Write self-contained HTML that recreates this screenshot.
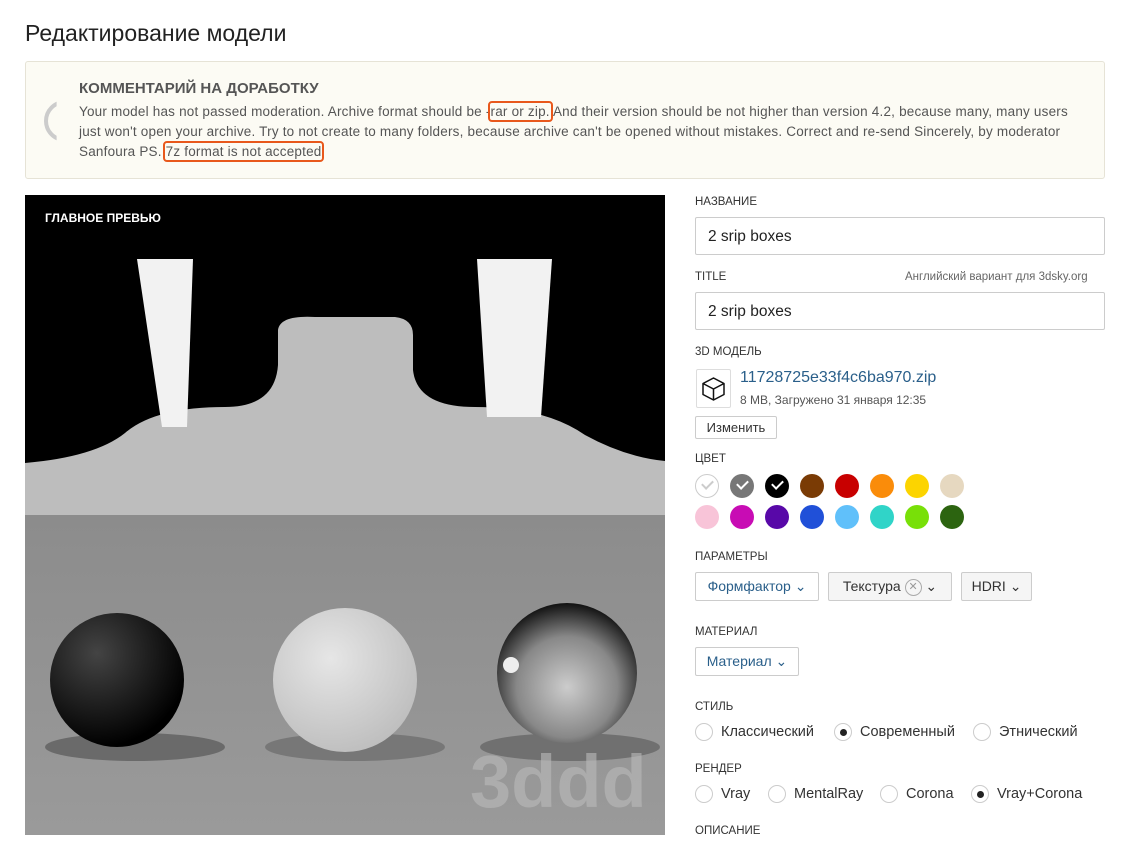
<!DOCTYPE html>
<html><head><meta charset="utf-8"><style>
body{margin:0;background:#fff;font-family:"Liberation Sans",sans-serif;color:#333;width:1138px;height:841px;overflow:hidden;position:relative}
.a{position:absolute}
h1{position:absolute;left:25px;top:20px;margin:0;font-weight:normal;font-size:23px;color:#222}
.note{left:25px;top:61px;width:1078px;height:116px;border:1px solid #e6e3d6;background:#fcfbf4;border-radius:3px}
.note .t{left:53px;top:18px;font-weight:bold;font-size:15px;color:#555}
.note .b{left:53px;top:40px;width:1010px;font-size:13.5px;line-height:20px;color:#555;white-space:nowrap;letter-spacing:0.2px}
.hl{outline:2px solid #e8581c;outline-offset:1px;border-radius:1px}
.lbl{font-size:11.5px;color:#333}
.inp{border:1px solid #ccc;border-radius:2px;width:410px;height:38px;font-size:15.5px;line-height:37px;padding-left:12px;box-sizing:border-box;color:#222}
.btn{border:1px solid #ccc;border-radius:2px;font-size:14px;box-sizing:border-box;text-align:center;background:#fff}
.dot{width:24px;height:24px;border-radius:50%}
.rad{width:18px;height:18px;border:1px solid #ccc;border-radius:50%;box-sizing:border-box}
.rad.on::after{content:"";position:absolute;left:5px;top:5px;width:7px;height:7px;border-radius:50%;background:#222}
.rt{font-size:14.5px;color:#333}
.chk{position:absolute;left:7px;top:6px;width:9px;height:5px;border-left:2px solid #fff;border-bottom:2px solid #fff;transform:rotate(-45deg)}
</style></head><body>
<h1>Редактирование модели</h1>
<div class="a note">
<div class="a" style="left:18px;top:38px;width:34px;height:34px;border:4px solid #ccc;border-radius:50%;clip-path:inset(0 70% 0 0)"></div>
<div class="a t">КОММЕНТАРИЙ НА ДОРАБОТКУ</div>
<div class="a b">Your model has not passed moderation. Archive format should be -<span class="hl">rar or zip.</span> And their version should be not higher than version 4.2, because many, many users<br>just won't open your archive. Try to not create to many folders, because archive can't be opened without mistakes. Correct and re-send Sincerely, by moderator<br>Sanfoura PS. <span class="hl">7z format is not accepted</span></div>
</div>
<svg class="a" style="left:25px;top:195px" width="640" height="640" viewBox="0 0 640 640">
<defs>
<linearGradient id="fl" x1="0" y1="0" x2="0" y2="1"><stop offset="0" stop-color="#8c8c8c"/><stop offset="1" stop-color="#9a9a9a"/></linearGradient>
<radialGradient id="s1" cx="0.35" cy="0.3" r="0.7"><stop offset="0" stop-color="#444"/><stop offset="1" stop-color="#000"/></radialGradient>
<radialGradient id="s2" cx="0.4" cy="0.35" r="0.7"><stop offset="0" stop-color="#e6e6e6"/><stop offset="1" stop-color="#bdbdbd"/></radialGradient>
<radialGradient id="s3" cx="0.5" cy="0.6" r="0.6"><stop offset="0" stop-color="#ccc"/><stop offset="0.6" stop-color="#888"/><stop offset="1" stop-color="#111"/></radialGradient>
</defs>
<rect width="640" height="640" fill="#000"/>
<path d="M0,268 Q70,262 100,238 Q130,212 200,212 Q250,212 253,170 L253,135 Q255,120 290,122 L370,122 Q388,124 388,140 L388,175 Q392,212 450,212 Q520,212 560,240 Q600,262 640,266 L640,320 L0,320Z" fill="#bdbdbd"/>
<path d="M0,320 L640,320 L640,640 L0,640Z" fill="url(#fl)"/>
<ellipse cx="110" cy="552" rx="90" ry="14" fill="#6a6a6a"/>
<ellipse cx="330" cy="552" rx="90" ry="14" fill="#777"/>
<ellipse cx="545" cy="552" rx="90" ry="14" fill="#707070"/>
<path d="M112,64 L168,64 L162,232 L137,232Z" fill="#f2f2f2"/>
<path d="M452,64 L527,64 L516,222 L462,222Z" fill="#f2f2f2"/>
<circle cx="92" cy="485" r="67" fill="url(#s1)"/>
<circle cx="320" cy="485" r="72" fill="url(#s2)"/>
<circle cx="542" cy="478" r="70" fill="url(#s3)"/>
<circle cx="486" cy="470" r="8" fill="#eee"/>
<text x="20" y="27" fill="#fff" font-family="Liberation Sans" font-weight="bold" font-size="12">ГЛАВНОЕ ПРЕВЬЮ</text>
<text x="445" y="612" fill="#bbb" opacity="0.6" font-family="Liberation Sans" font-weight="bold" font-size="74">3ddd</text>
</svg>
<div class="a lbl" style="left:695px;top:196px">НАЗВАНИЕ</div>
<div class="a inp" style="left:695px;top:217px">2 srip boxes</div>
<div class="a lbl" style="left:695px;top:271px">TITLE</div>
<div class="a lbl" style="left:905px;top:271px;color:#666">Английский вариант для 3dsky.org</div>
<div class="a inp" style="left:695px;top:292px">2 srip boxes</div>
<div class="a lbl" style="left:695px;top:346px">3D МОДЕЛЬ</div>
<div class="a" style="left:696px;top:369px;width:33px;height:37px;border:1px solid #ddd;border-radius:2px">
<svg width="33" height="37" viewBox="0 0 33 37"><path d="M16.5,8 L27,13.5 L27,24.5 L16.5,30 L6,24.5 L6,13.5Z M6,13.5 L16.5,19 L27,13.5 M16.5,19 L16.5,30" fill="none" stroke="#111" stroke-width="1.5" stroke-linejoin="round"/></svg></div>
<div class="a" style="left:740px;top:369px;font-size:16px;color:#2a5f8a">11728725e33f4c6ba970.zip</div>
<div class="a" style="left:740px;top:393px;font-size:12px;color:#555">8 MB, Загружено 31 января 12:35</div>
<div class="a btn" style="left:695px;top:416px;width:82px;height:23px;line-height:21px;font-size:13px">Изменить</div>
<div class="a lbl" style="left:695px;top:453px">ЦВЕТ</div>
<div class="a dot" style="left:695px;top:474px;border:1px solid #ccc;box-sizing:border-box"><div class="chk" style="border-color:#ccc;left:6px;top:5px"></div></div>
<div class="a dot" style="left:730px;top:474px;background:#777"><div class="chk"></div></div>
<div class="a dot" style="left:765px;top:474px;background:#000"><div class="chk"></div></div>
<div class="a dot" style="left:800px;top:474px;background:#7a3b05"></div>
<div class="a dot" style="left:835px;top:474px;background:#c80000"></div>
<div class="a dot" style="left:870px;top:474px;background:#fa8c0a"></div>
<div class="a dot" style="left:905px;top:474px;background:#fcd400"></div>
<div class="a dot" style="left:940px;top:474px;background:#e6d8c0"></div>
<div class="a dot" style="left:695px;top:505px;background:#f8c4d8"></div>
<div class="a dot" style="left:730px;top:505px;background:#c80cb4"></div>
<div class="a dot" style="left:765px;top:505px;background:#5808a8"></div>
<div class="a dot" style="left:800px;top:505px;background:#2050d8"></div>
<div class="a dot" style="left:835px;top:505px;background:#60c0fa"></div>
<div class="a dot" style="left:870px;top:505px;background:#30d4c8"></div>
<div class="a dot" style="left:905px;top:505px;background:#78e008"></div>
<div class="a dot" style="left:940px;top:505px;background:#2c6410"></div>
<div class="a lbl" style="left:695px;top:551px">ПАРАМЕТРЫ</div>
<div class="a btn" style="left:695px;top:572px;width:124px;height:29px;line-height:27px;color:#2a5f8a">Формфактор ⌄</div>
<div class="a btn" style="left:828px;top:572px;width:124px;height:29px;line-height:27px;background:#f5f5f5">Текстура <span style="display:inline-block;width:15px;height:15px;border:1px solid #aaa;border-radius:50%;font-size:11px;line-height:15px;color:#999;vertical-align:middle">✕</span> ⌄</div>
<div class="a btn" style="left:961px;top:572px;width:71px;height:29px;line-height:27px;background:#f5f5f5">HDRI ⌄</div>
<div class="a lbl" style="left:695px;top:626px">МАТЕРИАЛ</div>
<div class="a btn" style="left:695px;top:647px;width:104px;height:29px;line-height:27px;color:#2a5f8a">Материал ⌄</div>
<div class="a lbl" style="left:695px;top:701px">СТИЛЬ</div>
<div class="a rad" style="left:695px;top:723px"></div><div class="a rt" style="left:721px;top:724px">Классический</div>
<div class="a rad on" style="left:834px;top:723px"></div><div class="a rt" style="left:860px;top:724px">Современный</div>
<div class="a rad" style="left:973px;top:723px"></div><div class="a rt" style="left:999px;top:724px">Этнический</div>
<div class="a lbl" style="left:695px;top:763px">РЕНДЕР</div>
<div class="a rad" style="left:695px;top:785px"></div><div class="a rt" style="left:721px;top:786px">Vray</div>
<div class="a rad" style="left:768px;top:785px"></div><div class="a rt" style="left:794px;top:786px">MentalRay</div>
<div class="a rad" style="left:880px;top:785px"></div><div class="a rt" style="left:906px;top:786px">Corona</div>
<div class="a rad on" style="left:971px;top:785px"></div><div class="a rt" style="left:997px;top:786px">Vray+Corona</div>
<div class="a lbl" style="left:695px;top:825px">ОПИСАНИЕ</div>
</body></html>
